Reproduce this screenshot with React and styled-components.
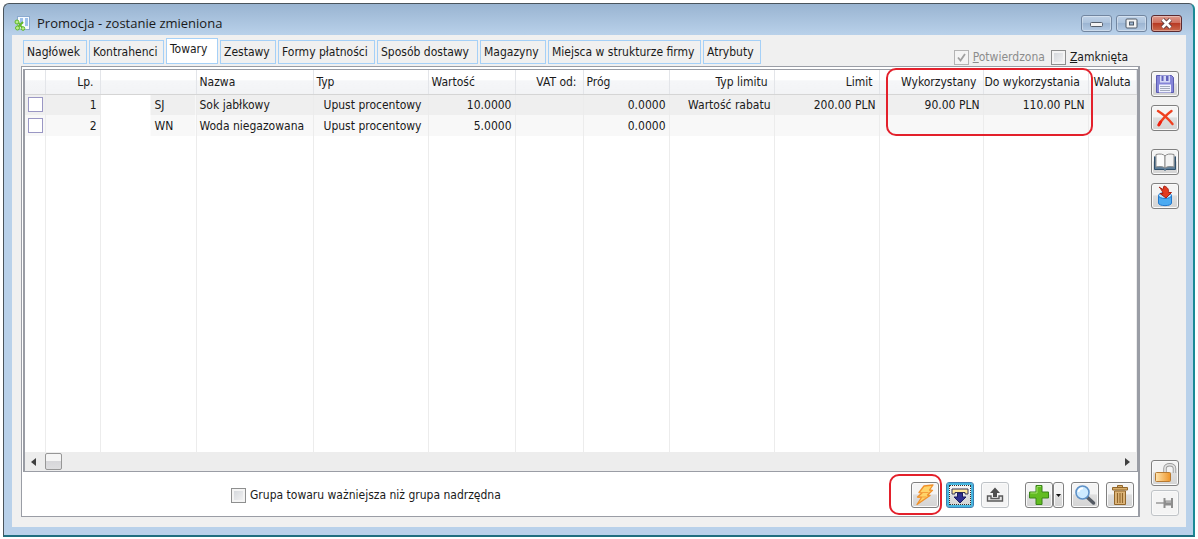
import React from "react";
import styled, { createGlobalStyle } from "styled-components";

const GlobalStyle = createGlobalStyle`
  * {
    box-sizing: border-box;
  }

  body {
    margin: 0;
    background: #fff;
    color: #1a1a1a;
    font-family: "DejaVu Sans Condensed", "DejaVu Sans", sans-serif;
    font-size: 12px;
    line-height: 16px;
  }

  button,
  input {
    margin: 0;
    padding: 0;
    font: inherit;
    color: inherit;
  }
`;

const Page = styled.div`
  display: flex;
  min-height: 100vh;
  padding: 3px 3px 2px;
`;

const Window = styled.main`
  display: flex;
  flex: 1;
  flex-direction: column;
  min-width: 0;
  padding: 0 7px 8px 8px;
  border: 1px solid #4a545c;
  border-right: 2px solid #1b8a96;
  border-bottom: 2px solid #1f6f80;
  border-radius: 6px 6px 0 0;
  background: linear-gradient(#99b4d1, #b9d1ea 31px);
`;

const TitleBar = styled.header`
  display: flex;
  height: 31px;
  padding: 7px 4px 0 2px;
  align-items: center;
  gap: 6px;
`;

const Title = styled.h1`
  flex: 1;
  margin: 0;
  font-family: "Open Sans", sans-serif;
  font-size: 13px;
  font-weight: normal;
`;

const CaptionButtons = styled.div`
  display: flex;
  gap: 4px;
`;

const CaptionButton = styled.button`
  display: flex;
  width: 31px;
  height: 17px;
  align-items: center;
  justify-content: center;
  border: 1px solid ${(p) => (p.$close ? "#5b2a30" : "#7286a0")};
  border-radius: 3px;
  background: ${(p) =>
    p.$close
      ? "linear-gradient(#dd9a8d, #d0705f 45%, #b83a24 50%, #cb6a4e)"
      : "linear-gradient(#bfd2e8, #adc3dc 45%, #9cb5d2 50%, #b4cae3)"};
  box-shadow: inset 0 0 0 1px rgba(255, 255, 255, 0.35);
`;

const Client = styled.div`
  display: flex;
  flex: 1;
  min-width: 0;
  background: #f0f0f0;
`;

const Main = styled.div`
  display: flex;
  flex: 1;
  flex-direction: column;
  min-width: 0;
  padding: 3px 0 10px 9px;
`;

const TopRow = styled.div`
  display: flex;
  height: 28px;
  justify-content: space-between;
`;

const Tabs = styled.nav`
  display: flex;
  height: 26px;
  padding-left: 2px;
  align-items: flex-end;
  gap: 2px;
`;

const Tab = styled.button`
  width: ${(p) => p.$width}px;
  height: ${(p) => (p.$active ? 26 : 24)}px;
  padding: 0 0 ${(p) => (p.$active ? 4 : 0)}px 3px;
  border: 1px solid #a5d0f7;
  background: ${(p) => (p.$active ? "#fff" : "#f0f0f0")};
  text-align: left;
  white-space: nowrap;
`;

const Flags = styled.div`
  display: flex;
  padding: 11px 12px 0 0;
  gap: 6px;
`;

const CheckLabel = styled.label`
  display: flex;
  height: 16px;
  align-items: center;
  gap: 4px;
  color: ${(p) => (p.$disabled ? "#8c8c8c" : "inherit")};
  white-space: nowrap;
`;

const Check = styled.input.attrs({ type: "checkbox" })`
  width: 15px;
  height: 15px;
  appearance: none;
  border: 1px solid ${(p) => (p.disabled ? "#b4b4b4" : "#8e8f8f")};
  background: linear-gradient(135deg, #cfd3d8, #f6f6f6);
  box-shadow: inset 0 0 0 2px #f4f4f4;

  &:checked {
    background: #f4f4f4
      url("data:image/svg+xml,%3Csvg xmlns='http://www.w3.org/2000/svg' viewBox='0 0 13 13'%3E%3Cpath d='M3 6.5l2.5 3L10 3' fill='none' stroke='%23a0a0a0' stroke-width='1.8'/%3E%3C/svg%3E");
    box-shadow: none;
  }
`;

const Panel = styled.section`
  display: flex;
  flex: 1;
  flex-direction: column;
  min-width: 0;
  border: 1px solid #9a9da5;
  border-right-width: 2px;
  background: #fff;
`;

const List = styled.div`
  position: relative;
  display: grid;
  flex: 1;
  grid-template-rows: 1fr 19px;
  margin: 2px 0 0 1px;
  border: 1px solid #9a9da5;
  border-width: 1px 1px 1px 2px;
`;

const Table = styled.table`
  width: 100%;
  height: 100%;
  border-collapse: collapse;
  table-layout: fixed;
`;

const HeadCell = styled.th`
  height: 24px;
  padding: 0 ${(p) => (p.$tight ? 0 : 6)}px 0 ${(p) => p.$headIndent ?? 3}px;
  border-right: 1px solid #e3e5e9;
  border-bottom: 1px solid #d5d5d5;
  background: linear-gradient(#fff 40%, #f5f6f8 45%, #f2f3f5);
  font-weight: normal;
  text-align: ${(p) => p.$align || "left"};
  white-space: nowrap;
`;

const Row = styled.tr`
  height: 21px;
  background: ${(p) => (p.$selected ? "#efefef" : "#f8f8f8")};
`;

const Cell = styled.td`
  padding: 0 ${(p) => (p.$flush ? 0 : 3)}px 0 ${(p) => p.$indent ?? 3}px;
  border-right: 1px solid #ececec;
  text-align: ${(p) => p.$align || "left"};
  white-space: nowrap;
  ${(p) => p.$masked && "background: linear-gradient(to right, #fff 50px, transparent 50px);"}
`;

const RowCheck = styled(Check)`
  display: block;
  margin-left: 3px;
  border-color: #9a97c4;
  background: #fff;
  box-shadow: none;
`;

const FillerCell = styled.td`
  padding: 0;
  border-right: 1px solid #ececec;
`;

const ScrollBar = styled.div`
  display: flex;
  padding: 0 7px 0 6px;
  align-items: center;
  background: #ededed;
`;

const ScrollThumb = styled.div`
  width: 17px;
  height: 17px;
  margin-left: 9px;
  border: 1px solid #979797;
  border-radius: 2px;
  background: linear-gradient(#f5f5f5 45%, #d7d7da 50%, #dedee0);
`;

const ScrollArrow = styled.div`
  width: 0;
  height: 0;
  margin-left: ${(p) => (p.$right ? "auto" : 0)};
  border: 4px solid transparent;
  border-${(p) => (p.$right ? "left" : "right")}: 5px solid #404040;
  border-${(p) => (p.$right ? "right" : "left")}-width: 0;
`;

const Footer = styled.footer`
  display: flex;
  height: 44px;
  padding: 2px 4px 0 209px;
  align-items: center;
  justify-content: space-between;
`;

const Actions = styled.div`
  display: flex;
  gap: 7px;
`;

const ActionGroup = styled.div`
  position: relative;
  display: flex;
  margin-left: ${(p) => (p.$apart ? 9 : 0)}px;
`;

const ToolButton = styled.button`
  display: flex;
  width: ${(p) => (p.$narrow ? 11 : 28)}px;
  height: 26px;
  align-items: center;
  justify-content: center;
  border: 1px solid ${(p) => (p.disabled ? "#bfc3c7" : "#808080")};
  border-radius: 3px;
  background: ${(p) =>
    p.disabled ? "#f4f4f4" : "linear-gradient(#f4f4f4 45%, #dedede 50%, #d4d4d4)"};
  box-shadow: inset 0 0 0 1px #fafafa;

  ${(p) =>
    p.$focused &&
    `
    border-color: #3c7fb1;
    outline: 1px dotted #333;
    outline-offset: -4px;
    box-shadow: inset 0 0 0 2px #48b7e0;
  `}
`;

const Highlight = styled.div`
  position: absolute;
  border: 2px solid #e3202b;
  border-radius: 10px;
  pointer-events: none;
`;

const UsageHighlight = styled(Highlight)`
  top: -2px;
  left: 861px;
  width: 207px;
  height: 68px;
`;

const ButtonHighlight = styled(Highlight)`
  top: -8px;
  right: -3px;
  width: 53px;
  height: 41px;
`;

const SideBar = styled.aside`
  display: flex;
  width: 46px;
  flex-direction: column;
  padding: 36px 0 11px 11px;
`;

const SideGroup = styled.div`
  display: flex;
  flex-direction: column;
  gap: ${(p) => p.$gap}px;
  margin-top: ${(p) => (p.$bottom ? "auto" : 0)};
  margin-bottom: ${(p) => (p.$bottom ? 0 : 18)}px;
`;

const AppIcon = () => (
  <svg width="17" height="17" viewBox="0 0 17 17">
    <rect x="3.5" y="1.5" width="12" height="13" fill="#f5faff" stroke="#8baad0" />
    <path d="M6 3h3v6H6zM11 3h3v8h-3z" fill="#9dc0ea" />
    <path d="M3 6l7 9M9 7l-6 6" stroke="#62b82c" strokeWidth="2" fill="none" />
    <circle cx="3" cy="7" r="2" fill="#b9ec8a" stroke="#62b82c" />
    <circle cx="3.5" cy="13" r="2" fill="#b9ec8a" stroke="#62b82c" />
    <circle cx="9" cy="13.5" r="1.8" fill="#b9ec8a" stroke="#62b82c" />
  </svg>
);

const MinimizeIcon = () => (
  <svg width="15" height="11" viewBox="0 0 15 11">
    <rect x="1.5" y="4.5" width="12" height="4" rx="1" fill="#f4f4f4" stroke="#555f6c" />
  </svg>
);

const MaximizeIcon = () => (
  <svg width="13" height="11" viewBox="0 0 13 11">
    <rect x="1" y="1" width="11" height="9" rx="1" fill="#f4f4f4" stroke="#4d5866" />
    <rect x="4.5" y="4" width="4" height="3" fill="#9db5d0" stroke="#4d5866" />
  </svg>
);

const CloseIcon = () => (
  <svg width="15" height="11" viewBox="0 0 15 11">
    <path d="M3.5 1.5l8 8M11.5 1.5l-8 8" stroke="#5c3d40" strokeWidth="4.4" />
    <path d="M3.5 1.5l8 8M11.5 1.5l-8 8" stroke="#fff" strokeWidth="2.6" />
  </svg>
);

const SaveIcon = () => (
  <svg width="20" height="20" viewBox="0 0 20 20">
    <path d="M1.5 1.5h15l2 2v15h-17z" fill="#8585d8" stroke="#5b5bb2" />
    <path d="M5 1.5h10v7H5z" fill="#d5d9f7" />
    <path d="M6.5 2h2v5h-2zM11 2h2.5v5H11z" fill="#6262bd" />
    <path d="M4 10.5h12v8H4z" fill="#f0f2ff" />
    <path d="M5 12.5h10M5 14.5h10M5 16.5h10" stroke="#a2aabd" />
  </svg>
);

const DeleteIcon = () => (
  <svg width="20" height="20" viewBox="0 0 20 20">
    <path
      d="M3 3c5 3 10 7.500 14.500 13M16.500 3C11 7 7 11.500 4 16.500"
      fill="none"
      stroke="#f0401f"
      strokeWidth="2.4"
      strokeLinecap="round"
    />
    <path d="M5.500 14L3.800 17" stroke="#f0200f" strokeWidth="3" strokeLinecap="round" />
  </svg>
);

const BookIcon = () => (
  <svg width="24" height="20" viewBox="0 0 24 20">
    <path d="M1.500 4.500v13H11l1 1 1-1h9.500v-13" fill="#5e7f9b" stroke="#31506b" />
    <path d="M3 2.500c4-1 7.500-.5 9 1.500v12c-2-1.500-5.500-1.800-9-1z" fill="#fbfbfb" stroke="#8a8a8a" />
    <path d="M21 2.500c-4-1-7.500-.5-9 1.500v12c2-1.500 5.500-1.800 9-1z" fill="#f2f2f2" stroke="#8a8a8a" />
  </svg>
);

const ImportIcon = () => (
  <svg width="20" height="22" viewBox="0 0 20 22">
    <path d="M3.500 10v8c0 3.500 13 3.500 13 0v-8" fill="#4cabf2" stroke="#2178cc" />
    <ellipse cx="10" cy="10.500" rx="6.500" ry="3" fill="#b5e0ff" stroke="#2178cc" />
    <path
      d="M4 2l4 2.500 1-3.500c3.500 1 5 3.500 4.500 6.500h3l-5.500 5.500L5 8.500h3C7.500 6 6 4 4 2z"
      fill="#e33a20"
      stroke="#a92012"
    />
  </svg>
);

const UnlockIcon = () => (
  <svg width="24" height="22" viewBox="0 0 24 22">
    <defs>
      <linearGradient id="brass">
        <stop offset="0" stopColor="#ffe6b0" />
        <stop offset="1" stopColor="#ee9428" />
      </linearGradient>
    </defs>
    <path d="M12 11V6.500c0-5 9.500-5 9.500 0V11" fill="none" stroke="#999" strokeWidth="3.500" />
    <path d="M12 11V6.500c0-5 9.500-5 9.500 0V11" fill="none" stroke="#e3e3e3" strokeWidth="1.700" />
    <rect x="2.500" y="10.500" width="15" height="9" rx="1" fill="url(#brass)" stroke="#b77a32" />
  </svg>
);

const PinIcon = () => (
  <svg width="20" height="16" viewBox="0 0 20 16">
    <path d="M1 8h8" stroke="#9a9a9a" strokeWidth="1.500" />
    <path d="M8.500 3h2v2.500H16V3h2v10h-2v-2.500h-5.500V13h-2z" fill="#8d8d8d" />
    <path d="M11 7h5" stroke="#ccc" />
  </svg>
);

const LightningIcon = () => (
  <svg width="22" height="22" viewBox="0 0 22 22">
    <path
      d="M10 2l9-1-3.500 5 3 .3-5 4.700 2.500.5L3 20.500l4.500-7-4-.5 4.500-4-3-.5z"
      fill="#ffd469"
      stroke="#f0902a"
      strokeWidth="1.300"
      strokeLinejoin="round"
    />
    <path d="M5.500 8.500h9M4.500 13h8" stroke="#f5a03c" />
  </svg>
);

const ReceiveIcon = () => (
  <svg width="20" height="18" viewBox="0 0 20 18">
    <path d="M2 3h16v5h-3V6.500H5V8H2z" fill="#ffe89a" stroke="#353559" />
    <path d="M7.500 7h5v4H16L10 17l-6-6h3.500z" fill="#2f2f91" stroke="#1c1c60" />
  </svg>
);

const SendIcon = () => (
  <svg width="18" height="16" viewBox="0 0 18 16">
    <path d="M5 9H1.500v5h15V9H13v2.500H5z" fill="#e4e4e4" stroke="#5a5a5a" strokeWidth="1.400" />
    <path d="M9 .5L4 6h3v4h4V6h3z" fill="#4f4f4f" />
  </svg>
);

const AddIcon = () => (
  <svg width="22" height="22" viewBox="0 0 22 22">
    <path
      d="M8 1.500h6V8h6.500v6H14v6.500H8V14H1.500V8H8z"
      fill="#62bc21"
      stroke="#388318"
      strokeLinejoin="round"
    />
    <path d="M9 2.500h4M2.500 9H9V3" fill="none" stroke="#a1e06b" />
  </svg>
);

const CaretIcon = () => (
  <svg width="5" height="3" viewBox="0 0 5 3">
    <path d="M0 0h5L2.500 3z" fill="#111" />
  </svg>
);

const SearchIcon = () => (
  <svg width="22" height="22" viewBox="0 0 22 22">
    <path d="M13.500 13.500l6 5.500" stroke="#555b64" strokeWidth="3.500" strokeLinecap="round" />
    <circle cx="8.500" cy="8.500" r="6.500" fill="#cdeaff" stroke="#5e91c7" strokeWidth="1.600" />
    <path d="M4.500 8c.3-2.500 2-3.700 4.500-3.700" fill="none" stroke="#fff" strokeWidth="1.800" />
  </svg>
);

const TrashIcon = () => (
  <svg width="20" height="22" viewBox="0 0 20 22">
    <path d="M7.500 4V1.500h5V4M2.500 3.500h15v2.500h-15z" fill="#d7ae6b" stroke="#91662b" />
    <path d="M4.500 7h11v13.500h-11z" fill="#dcb478" stroke="#91662b" />
    <path d="M7.500 9v10M10 9v10M12.500 9v10" stroke="#91662b" strokeWidth="1.100" />
  </svg>
);

const tabs = [
  { name: "Nagłówek", width: 64 },
  { name: "Kontrahenci", width: 75 },
  { name: "Towary", width: 52, active: true },
  { name: "Zestawy", width: 56 },
  { name: "Formy płatności", width: 97 },
  { name: "Sposób dostawy", width: 101 },
  { name: "Magazyny", width: 66 },
  { name: "Miejsca w strukturze firmy", width: 153 },
  { name: "Atrybuty", width: 58 },
];

const columns = [
  { key: "check", width: 20 },
  { key: "lp", label: "Lp.", width: 55, align: "right" },
  { key: "code", label: "", width: 96, indent: 54 },
  { key: "name", label: "Nazwa", width: 117 },
  { key: "type", label: "Typ", width: 115, indent: 10 },
  { key: "value", label: "Wartość", width: 87, cellAlign: "right" },
  { key: "vat", label: "VAT od:", width: 68, align: "right" },
  { key: "threshold", label: "Próg", width: 86, cellAlign: "right" },
  { key: "limitType", label: "Typ limitu", width: 105, align: "right" },
  { key: "limit", label: "Limit", width: 105, align: "right" },
  { key: "used", label: "Wykorzystany", width: 104, align: "right" },
  {
    key: "left",
    label: "Do wykorzystania",
    width: 105,
    tight: true,
    headIndent: 1,
    cellAlign: "right",
  },
  { key: "currency", label: "Waluta", headIndent: 5 },
];

const rows = [
  {
    lp: 1,
    code: "SJ",
    name: "Sok jabłkowy",
    type: "Upust procentowy",
    value: "10.0000",
    threshold: "0.0000",
    limitType: "Wartość rabatu",
    limit: "200.00 PLN",
    used: "90.00 PLN",
    left: "110.00 PLN",
  },
  {
    lp: 2,
    code: "WN",
    name: "Woda niegazowana",
    type: "Upust procentowy",
    value: "5.0000",
    threshold: "0.0000",
  },
];

function ItemsTable() {
  return (
    <Table>
      <colgroup>
        {columns.map((c) => (
          <col key={c.key} width={c.width} />
        ))}
      </colgroup>
      <thead>
        <tr>
          {columns.map((c) => (
            <HeadCell key={c.key} $align={c.align} $tight={c.tight} $headIndent={c.headIndent}>
              {c.label}
            </HeadCell>
          ))}
        </tr>
      </thead>
      <tbody>
        {rows.map((row, i) => (
          <Row key={row.lp} $selected={i === 0}>
            {columns.map((c) => (
              <Cell
                key={c.key}
                $align={c.cellAlign || c.align}
                $indent={c.key === "check" ? 0 : c.indent}
                $masked={c.key === "code"}
                $flush={c.key === "check"}
              >
                {c.key === "check" ? <RowCheck aria-label={row.name} /> : row[c.key]}
              </Cell>
            ))}
          </Row>
        ))}
        <tr>
          {columns.map((c) => (
            <FillerCell key={c.key} />
          ))}
        </tr>
      </tbody>
    </Table>
  );
}

export default function App() {
  return (
    <Page>
      <GlobalStyle />
      <Window>
        <TitleBar>
          <AppIcon />
          <Title>Promocja - zostanie zmieniona</Title>
          <CaptionButtons>
            <CaptionButton aria-label="Minimalizuj">
              <MinimizeIcon />
            </CaptionButton>
            <CaptionButton aria-label="Maksymalizuj">
              <MaximizeIcon />
            </CaptionButton>
            <CaptionButton $close aria-label="Zamknij">
              <CloseIcon />
            </CaptionButton>
          </CaptionButtons>
        </TitleBar>
        <Client>
          <Main>
            <TopRow>
              <Tabs>
                {tabs.map((t) => (
                  <Tab key={t.name} $width={t.width} $active={t.active}>
                    {t.name}
                  </Tab>
                ))}
              </Tabs>
              <Flags>
                <CheckLabel $disabled>
                  <Check defaultChecked disabled />
                  <span>
                    <u>P</u>otwierdzona
                  </span>
                </CheckLabel>
                <CheckLabel>
                  <Check />
                  <span>
                    <u>Z</u>amknięta
                  </span>
                </CheckLabel>
              </Flags>
            </TopRow>
            <Panel>
              <List>
                <ItemsTable />
                <ScrollBar>
                  <ScrollArrow />
                  <ScrollThumb />
                  <ScrollArrow $right />
                </ScrollBar>
                <UsageHighlight />
              </List>
              <Footer>
                <CheckLabel>
                  <Check />
                  Grupa towaru ważniejsza niż grupa nadrzędna
                </CheckLabel>
                <Actions>
                  <ActionGroup>
                    <ToolButton aria-label="Przelicz">
                      <LightningIcon />
                    </ToolButton>
                    <ButtonHighlight />
                  </ActionGroup>
                  <ToolButton $focused aria-label="Pobierz">
                    <ReceiveIcon />
                  </ToolButton>
                  <ToolButton disabled aria-label="Wyślij">
                    <SendIcon />
                  </ToolButton>
                  <ActionGroup $apart>
                    <ToolButton aria-label="Dodaj">
                      <AddIcon />
                    </ToolButton>
                    <ToolButton $narrow aria-label="Więcej">
                      <CaretIcon />
                    </ToolButton>
                  </ActionGroup>
                  <ToolButton aria-label="Podgląd">
                    <SearchIcon />
                  </ToolButton>
                  <ToolButton aria-label="Usuń">
                    <TrashIcon />
                  </ToolButton>
                </Actions>
              </Footer>
            </Panel>
          </Main>
          <SideBar>
            <SideGroup $gap={8}>
              <ToolButton aria-label="Zapisz">
                <SaveIcon />
              </ToolButton>
              <ToolButton aria-label="Anuluj">
                <DeleteIcon />
              </ToolButton>
            </SideGroup>
            <SideGroup $gap={8}>
              <ToolButton aria-label="Historia">
                <BookIcon />
              </ToolButton>
              <ToolButton aria-label="Importuj">
                <ImportIcon />
              </ToolButton>
            </SideGroup>
            <SideGroup $gap={4} $bottom>
              <ToolButton aria-label="Odblokuj">
                <UnlockIcon />
              </ToolButton>
              <ToolButton disabled aria-label="Przypnij">
                <PinIcon />
              </ToolButton>
            </SideGroup>
          </SideBar>
        </Client>
      </Window>
    </Page>
  );
}
